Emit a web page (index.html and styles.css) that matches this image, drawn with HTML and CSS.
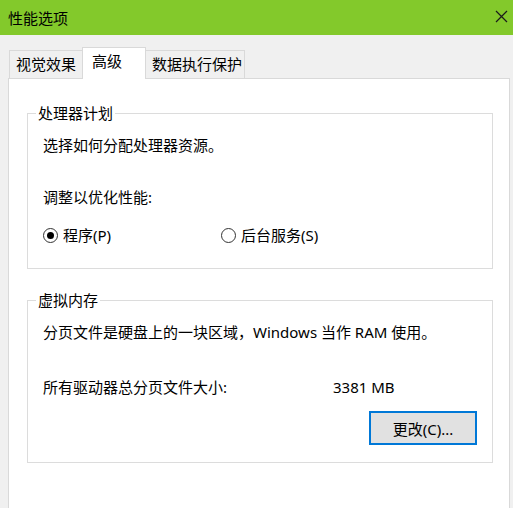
FILE: index.html
```html
<!DOCTYPE html>
<html lang="zh-CN">
<head>
    <meta charset="UTF-8">
    <meta name="viewport" content="width=device-width, initial-scale=1.0">
    <title>性能选项</title>
    <link rel="stylesheet" href="styles.css">
</head>
<body>
    <!-- Заголовок окна -->
    <div class="titlebar">
        <span class="title">性能选项</span>
        <svg class="close" width="13" height="13" viewBox="0 0 13 13">
            <path d="M1 1 L12 12 M12 1 L1 12" stroke="#1a1a1a" stroke-width="1.2" fill="none"/>
        </svg>
    </div>

    <div class="window">
        <!-- Вкладки -->
        <div class="tabs">
            <div class="tab tab-visual">视觉效果</div>
            <div class="tab tab-active">高级</div>
            <div class="tab tab-dep">数据执行保护</div>
        </div>

        <div class="panel">
            <fieldset class="group group-cpu">
                <legend>处理器计划</legend>
                <p class="line">选择如何分配处理器资源。</p>
                <p class="line line-gap">调整以优化性能:</p>
                <div class="radios">
                    <label class="radio radio-first"><span class="dot checked"></span>程序(P)</label>
                    <label class="radio"><span class="dot"></span>后台服务(S)</label>
                </div>
            </fieldset>

            <fieldset class="group group-mem">
                <legend>虚拟内存</legend>
                <p class="line">分页文件是硬盘上的一块区域，Windows 当作 RAM 使用。</p>
                <div class="size-row">
                    <span class="size-label">所有驱动器总分页文件大小:</span>
                    <span>3381 MB</span>
                </div>
                <div class="actions">
                    <button class="btn">更改(C)...</button>
                </div>
            </fieldset>
        </div>
    </div>
</body>
</html>
```

FILE: styles.css
```css
body {
    margin: 0;
    background-color: #f0f0f0;
    font-family: "Noto Sans", "Noto Sans CJK SC", sans-serif;
    font-size: 15px;
    color: #000;
    overflow: hidden;
}
.titlebar {
    height: 35px;
    background-color: #83c92b;
    display: flex;
    align-items: center;
    justify-content: space-between;
    padding: 0 5px 0 8px;
}
.title {
    line-height: 20px;
}
.close {
    margin-top: -3px;
}
.window {
    padding-top: 12px;
}
.tabs {
    display: flex;
    align-items: flex-end;
    height: 31px;
    margin-left: 9px;
    position: relative;
    z-index: 1;
}
.tab {
    box-sizing: border-box;
    height: 28px;
    line-height: 26px;
    border: 1px solid #d9d9d9;
    border-bottom: none;
    background-color: #f0f0f0;
    padding-left: 6px;
    white-space: nowrap;
}
.tab-visual {
    width: 73px;
    border-right: none;
}
.tab-active {
    width: 64px;
    height: 32px;
    margin-bottom: -1px;
    background-color: #fff;
    padding-left: 9px;
    line-height: 27px;
}
.tab-dep {
    width: 99px;
    border-left: none;
}
.panel {
    box-sizing: border-box;
    margin-left: 8px;
    width: 502px;
    height: 440px;
    background-color: #fff;
    border: 1px solid #d9d9d9;
    padding: 0 0 0 18px;
}
.group {
    box-sizing: border-box;
    width: 466px;
    margin: 0;
    border: 1px solid #dcdcdc;
    padding: 0 15px 0 15px;
}
.group legend {
    line-height: 20px;
    padding: 0 2px;
    margin-left: -7px;
}
.group-cpu {
    margin-top: 24px;
    height: 166px;
}
.group-mem {
    margin-top: 21px;
    height: 173px;
}
.line {
    margin: 12px 0 0;
    line-height: 20px;
    white-space: nowrap;
}
.line-gap {
    margin-top: 32px;
}
.radios {
    display: flex;
    margin-top: 18px;
    line-height: 20px;
}
.radio {
    display: flex;
    align-items: center;
}
.radio-first {
    width: 178px;
}
.dot {
    box-sizing: border-box;
    width: 15px;
    height: 15px;
    border: 1px solid #333;
    border-radius: 50%;
    margin-right: 5px;
    display: flex;
    align-items: center;
    justify-content: center;
}
.dot.checked::after {
    content: "";
    width: 7px;
    height: 7px;
    border-radius: 50%;
    background-color: #000;
}
.size-row {
    display: flex;
    margin-top: 35px;
    line-height: 20px;
}
.size-label {
    width: 290px;
}
.actions {
    display: flex;
    justify-content: flex-end;
    margin-top: 14px;
}
.btn {
    box-sizing: border-box;
    width: 108px;
    height: 34px;
    background-color: #e1e1e1;
    border: 2px solid #0078d7;
    font-family: inherit;
    font-size: 15px;
    color: #000;
    padding: 0;
}
```
